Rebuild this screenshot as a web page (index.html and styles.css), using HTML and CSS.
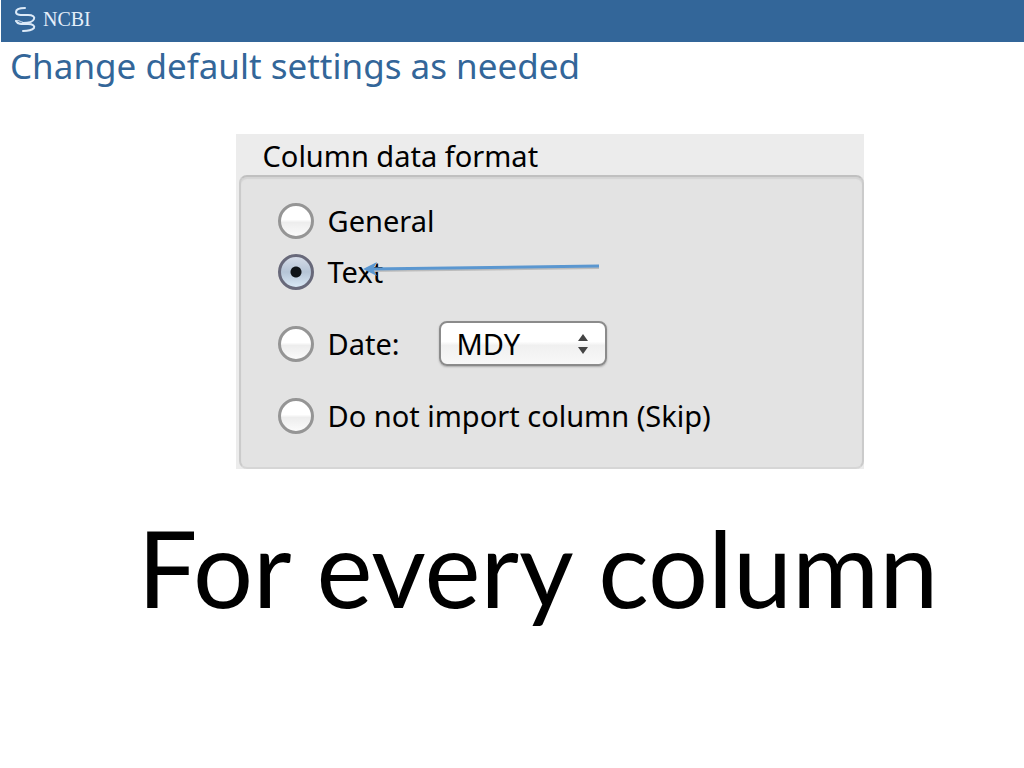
FILE: index.html
```
<!DOCTYPE html>
<html lang="en">
<head>
  <meta charset="UTF-8">
  <meta name="viewport" content="width=device-width, initial-scale=1.0">
  <title>Change default settings as needed</title>
  <link rel="stylesheet" href="styles.css">
</head>
<body>
  <header class="header">
    <svg class="logo" viewBox="0 0 24 26" aria-hidden="true">
      <path d="M12 2C6 2 3 3 3 6C3 10 10 9 15 9C20 9 22 11 21 13C20 16 15 17 10 17"/>
      <path d="M3 15C5 19 10 18 15 18C20 18 22 20 21 22C19 24 14 25 10 25"/>
      <path class="logo-thin" d="M3 15C5 13 9 17 13 17"/>
    </svg>
    <span class="brand">NCBI</span>
  </header>

  <main>
    <h1 class="title">Change default settings as needed</h1>

    <form class="panel">
      <div class="panel-title" id="formatLabel">Column data format</div>
      <div class="options" role="radiogroup" aria-labelledby="formatLabel">
        <div class="option">
          <input type="radio" name="format" id="general">
          <label for="general">General</label>
        </div>
        <div class="option">
          <input type="radio" name="format" id="text" checked>
          <label for="text">Text</label>
          <svg class="arrow" viewBox="0 0 240 20" aria-hidden="true">
            <path class="arrow-shadow" d="M8 13L238 10"/>
            <path class="arrow-line" d="M8 11L238 8"/>
            <path class="arrow-head" d="M2 11L16 4L12 11L16 18Z"/>
          </svg>
        </div>
        <div class="option spaced">
          <input type="radio" name="format" id="date">
          <label for="date" class="date-label">Date:</label>
          <div class="select-wrap">
            <select aria-label="Date format">
              <option>MDY</option>
              <option>DMY</option>
              <option>YMD</option>
            </select>
            <svg class="chevrons" viewBox="0 0 12 22" aria-hidden="true">
              <path d="M6 1L11 8H1ZM6 21L11 14H1Z"/>
            </svg>
          </div>
        </div>
        <div class="option spaced">
          <input type="radio" name="format" id="skip">
          <label for="skip">Do not import column (Skip)</label>
        </div>
      </div>
    </form>

    <p class="caption">For every column</p>
  </main>
</body>
</html>
```
FILE: styles.css
```
* {
  box-sizing: border-box;
}
body {
  margin: 0;
  background-color: #fff;
  color: #000;
  font-family: "Noto Sans", sans-serif;
}

/* Top bar */
.header {
  display: flex;
  align-items: center;
  gap: 6px;
  height: 42px;
  margin-left: 1px;
  padding: 0 12px 4px;
  background-color: #336699;
}
.logo {
  width: 24px;
  height: 26px;
  fill: none;
  stroke: #dceaf8;
  stroke-width: 2;
  stroke-linecap: round;
}
.logo-thin {
  stroke-width: 1;
}
.brand {
  color: #e4eefa;
  font-family: "Liberation Serif", serif;
  font-size: 20px;
}
.title {
  margin: 0;
  padding-left: 10px;
  color: #336699;
  font-size: 35px;
  font-weight: 400;
  line-height: 48px;
}

/* Column format panel */
.panel {
  width: 61.4%;
  margin: 44px 0 0 23%;
  padding-left: 3px;
  background-color: #ececec;
  font-size: 29px;
}
.panel-title {
  height: 41px;
  padding-left: 24px;
  line-height: 44px;
}
.options {
  display: flex;
  flex-direction: column;
  gap: 6px;
  padding: 21px 20px 29px 37px;
  background-color: #e3e3e3;
  border: 2px solid #cbcbcb;
  border-top-color: #c0c0c0;
  border-bottom-color: #d6d6d6;
  border-radius: 8px;
  box-shadow: inset 0 2px 1px #d4d4d4;
}
.option {
  position: relative;
  display: flex;
  align-items: center;
  height: 45px;
}
.spaced {
  margin-top: 21px;
}
input[type="radio"] {
  appearance: none;
  width: 36px;
  height: 36px;
  margin: 0 14px 0 0;
  border: 3px solid #959595;
  border-radius: 50%;
  background: linear-gradient(#fff 45%, #ededed 55%, #fbfbfb);
}
input[type="radio"]:checked {
  border-color: #68697a;
  background: radial-gradient(circle, #101418 5px, transparent 6px), linear-gradient(#d5dce8, #b5c4d6 50%, #d9e8f5);
}
.arrow {
  position: absolute;
  left: 83px;
  top: 9px;
  width: 240px;
  height: 20px;
  fill: none;
}
.arrow-line {
  stroke: #5b97d0;
  stroke-width: 3;
}
.arrow-shadow {
  stroke: #bcbcbc;
  stroke-width: 2;
}
.arrow-head {
  fill: #5b97d0;
}
.date-label {
  width: 111px;
}
.select-wrap {
  position: relative;
}
select {
  display: block;
  appearance: none;
  width: 168px;
  height: 45px;
  padding: 0 16px;
  border: 2px solid #8b8b8b;
  border-radius: 8px;
  background: linear-gradient(#fff 45%, #f0f0f0 55%, #f8f8f8);
  box-shadow: 0 1px 2px #aaa;
  color: #000;
  font: inherit;
}
.chevrons {
  position: absolute;
  top: 12px;
  right: 18px;
  width: 12px;
  height: 22px;
  fill: #444;
  pointer-events: none;
}

.caption {
  margin: 34px 0 0;
  padding-left: 52px;
  font-family: Lato, sans-serif;
  font-size: 106px;
  line-height: 128px;
  text-align: center;
}
```
